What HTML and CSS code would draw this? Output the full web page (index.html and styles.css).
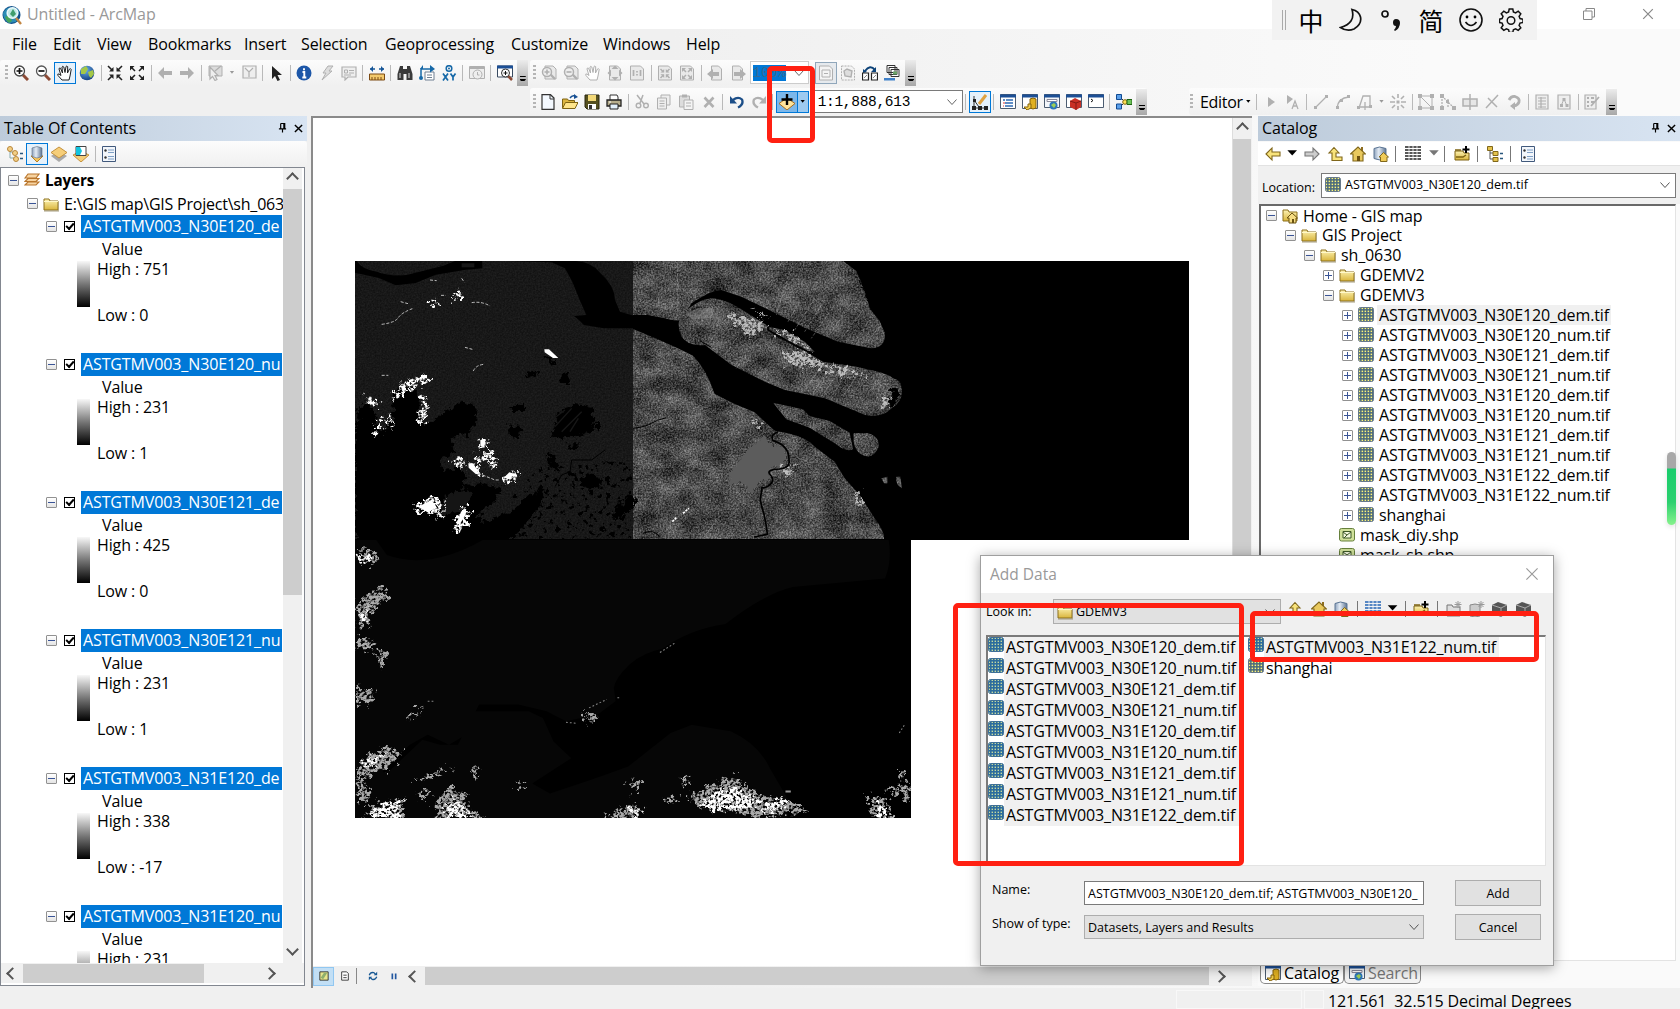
FILE: index.html
```html
<!DOCTYPE html>
<html lang="en">
<head>
<meta charset="utf-8">
<title>Untitled - ArcMap</title>
<link rel="stylesheet" href="styles.css">
</head>
<body>
<svg class="defs" width="0" height="0" aria-hidden="true">
  <defs>
    <linearGradient id="gold" x1="0" y1="0" x2="0" y2="1"><stop offset="0" stop-color="#fdf3b4"/><stop offset="1" stop-color="#d9b53c"/></linearGradient>
    <linearGradient id="steel" x1="0" y1="0" x2="1" y2="0"><stop offset="0" stop-color="#8fa3bd"/><stop offset=".4" stop-color="#e4ecf5"/><stop offset="1" stop-color="#5c7390"/></linearGradient>
    <radialGradient id="ball" cx=".4" cy=".3" r=".8"><stop offset="0" stop-color="#6db4ee"/><stop offset="1" stop-color="#0a3378"/></radialGradient>
    <pattern id="cells" width="3" height="3" patternUnits="userSpaceOnUse"><rect width="3" height="3" fill="#4b6a7c"/><rect x=".6" y=".6" width="1.5" height="1.5" fill="#fff57a"/></pattern>
    <pattern id="cells-sel" width="3" height="3" patternUnits="userSpaceOnUse"><rect width="3" height="3" fill="#2c6c9d"/><rect x=".6" y=".6" width="1.4" height="1.4" fill="#c5d9a0"/></pattern>
  </defs>
  <symbol id="logo" viewBox="0 0 20 20"><circle cx="9.500" cy="10" r="9" fill="#12508a"/><path d="M1 8q3-6 9-6 4 0 7 4l-3 11-7 1Q1 15 1 8" fill="#2b8cb5"/><path d="M3 12l4-2 3 6-3 2q-3-2-4-6" fill="#46a35a"/><circle cx="10.500" cy="8" r="5.300" fill="#bfe8e5" stroke="#e8f7fa" stroke-width="1.600"/><path d="M8 9l3-5 3 5-3 3z" fill="#3f9d6d"/><path d="M14 13l5 6" stroke="#c28541" stroke-width="2.400"/></symbol>
  <symbol id="zoomin" viewBox="0 0 16 16"><path d="M10 10l5 5" stroke="#8c4a35" stroke-width="3"/><circle cx="6.500" cy="6" r="5" fill="#fff" stroke="#444" stroke-width="1.300"/><path d="M3.500 6h6M6.500 3v6" stroke="#111" stroke-width="1.700"/></symbol>
  <symbol id="zoomout" viewBox="0 0 16 16"><path d="M10 10l5 5" stroke="#8c4a35" stroke-width="3"/><circle cx="6.500" cy="6" r="5" fill="#fff" stroke="#555" stroke-width="1.300"/><path d="M3.500 6h6" stroke="#111" stroke-width="1.700"/></symbol>
  <symbol id="hand" viewBox="0 0 16 16"><path d="M5 15L1 10.500Q0 8.500 2 9l2 1.500L2 4q0-1.500 1.500-.8L5.500 8 5 2q.7-1.500 1.800 0L8 7.500 9 1.500q1-1.200 1.700.2L10.500 8l2-4q1.300-.8 1.700.4L13 11l-1 4z" fill="#fff" stroke="currentColor"/></symbol>
  <symbol id="globe" viewBox="0 0 16 16"><circle cx="8" cy="8" r="7.300" fill="url(#ball)"/><path d="M2 4l5-3 2 3-3 5-4 0zM9 7l5-2 1 4-3 4-2-2z" fill="#a5c847"/></symbol>
  <symbol id="inward" viewBox="0 0 16 16"><path d="M1 1l4 4M15 1l-4 4M1 15l4-4M15 15l-4-4" stroke="currentColor" stroke-width="1.600"/><path d="M6.500 2v4.500H2zM9.500 2v4.500H14zM6.500 14V9.500H2zM9.500 14V9.500H14z" fill="currentColor"/></symbol>
  <symbol id="outward" viewBox="0 0 16 16"><path d="M2 2l4 4M14 2l-4 4M2 14l4-4M14 14l-4-4" stroke="currentColor" stroke-width="1.600"/><path d="M1 5.500V1h4.500zM10.500 1H15v4.500zM1 10.500V15h4.500zM10.500 15H15v-4.500z" fill="currentColor"/></symbol>
  <symbol id="back" viewBox="0 0 16 16"><path d="M1 8l6-6v4h8v4H7v4z" fill="currentColor"/></symbol>
  <symbol id="fwd" viewBox="0 0 16 16"><path d="M15 8L9 2v4H1v4h8v4z" fill="currentColor"/></symbol>
  <symbol id="select" viewBox="0 0 16 16"><path d="M2 1h13v10H2z" fill="#dcdcdc" stroke="currentColor"/><path d="M8 6l6-5M3 2v12l2.500-2.500L8 15.500l2-1-2-4h3z" fill="#eee" stroke="currentColor" stroke-width="1.200"/></symbol>
  <symbol id="clear" viewBox="0 0 16 16"><path d="M2 1h13v12H2zM4 3l4 4 4-4M8 7v5" fill="#eee" stroke="currentColor" stroke-width="1.200"/></symbol>
  <symbol id="cursor" viewBox="0 0 16 16"><path d="M4 1v13l3-3 2.500 5 2.500-1-2.500-5H14z" fill="currentColor"/></symbol>
  <symbol id="info" viewBox="0 0 16 16"><circle cx="8" cy="8" r="7.500" fill="#1d57a8"/><path d="M8 3.200v2M6.500 7H8.300v5.300M6.300 12.500h4" stroke="#fff" stroke-width="1.900" fill="none"/></symbol>
  <symbol id="bolt" viewBox="0 0 16 16"><path d="M9 1l5 0-4 5h3L3 15l4-7H4z" fill="#ddd" stroke="currentColor"/></symbol>
  <symbol id="bubble" viewBox="0 0 16 16"><path d="M1 2h14v10H7l-3 3v-3H1z" fill="#eee" stroke="currentColor" stroke-width="1.200"/><path d="M3.500 5h3v3h-3zM8 5.500h5M8 8h5M3 10h7" stroke="currentColor" fill="none"/></symbol>
  <symbol id="measure" viewBox="0 0 16 16"><path d="M1 4h5M10 4h5" stroke="#155597" stroke-width="1.500"/><path d="M4 1v6L1 4zM12 1v6l3-3z" fill="#155597"/><path d="M.5 9h15v6H.5z" fill="#f3c96b" stroke="#7c4a13"/><path d="M3 12v3M6 12v3M9 12v3M12 12v3" stroke="#7c4a13"/></symbol>
  <symbol id="find" viewBox="0 0 16 16"><path d="M3 1h3v3h4V1h3l2.500 8v6H9.500V9h-3v6H.5V9z" fill="#3a3a3a"/><path d="M3 8v5M12 8v5" stroke="#aaa" stroke-width="1.500"/></symbol>
  <symbol id="route" viewBox="0 0 16 16"><path d="M6 7h9v8H6z" fill="#fff" stroke="#6e7f91"/><path d="M8 10h5M8 12.500h5" stroke="#6e7f91"/><path d="M2 13V4h10" stroke="#1769a8" stroke-width="1.500" fill="none"/><path d="M11 0l5 4-5 3.500zM4 0v4H1z" fill="#1769a8"/><circle cx="2" cy="13" r="2" fill="#1769a8"/></symbol>
  <symbol id="gridmark" viewBox="0 0 16 16"><circle cx="8" cy="3.500" r="2.800" fill="none" stroke="#1769a8" stroke-width="1.500"/><circle cx="8" cy="3.500" r="1" fill="#1769a8"/><path d="M2 8.500l5 7M7 8.500l-5 7M9.500 8.500l2.500 3.500 2.500-3.500M12 12v3.500" stroke="#1769a8" stroke-width="1.700" fill="none"/></symbol>
  <symbol id="clock" viewBox="0 0 16 16"><path d="M.5 1.500h15v12H.5z" fill="#eee" stroke="currentColor"/><path d="M1 3h14" stroke="currentColor" stroke-width="2"/><circle cx="8.500" cy="9.500" r="4.500" fill="#eee" stroke="currentColor"/><path d="M8.500 7v3h2" stroke="currentColor" fill="none"/></symbol>
  <symbol id="viewer" viewBox="0 0 16 16"><path d="M.5 1h15v11H.5z" fill="#fff" stroke="#3a4b60"/><path d="M0 2h16" stroke="#1c4f95" stroke-width="3"/><path d="M11 11l4 4" stroke="#8c4a35" stroke-width="2.500"/><circle cx="8.500" cy="8" r="4" fill="#fff" stroke="#333"/><path d="M6.500 8h4M8.500 6v4" stroke="#111"/></symbol>
  <symbol id="pagemag" viewBox="0 0 16 16"><path d="M4 1h8l3 3v10H4z" fill="#e9e9e9" stroke="currentColor"/><path d="M9 9l5 5" stroke="currentColor" stroke-width="2.400"/><circle cx="6" cy="7" r="4.500" fill="#eee" stroke="currentColor" stroke-width="1.500"/><path d="M3.500 7h5M6 4.500v5" stroke="currentColor" stroke-width="1.600"/></symbol>
  <symbol id="pagemag2" viewBox="0 0 16 16"><path d="M4 1h8l3 3v10H4z" fill="#e9e9e9" stroke="currentColor"/><path d="M9 9l5 5" stroke="currentColor" stroke-width="2.400"/><circle cx="6" cy="7" r="4.500" fill="#eee" stroke="currentColor" stroke-width="1.500"/><path d="M3.500 7h5" stroke="currentColor" stroke-width="1.600"/></symbol>
  <symbol id="page4" viewBox="0 0 16 16"><path d="M2.500 1h8l3 3v11h-11z" fill="#e9e9e9" stroke="currentColor"/><path d="M8 .5l3.500 3.500h-7zM8 15.500l3.500-3.500h-7zM.5 8L4 4.500v7zM15.500 8L12 4.500v7z" fill="currentColor"/></symbol>
  <symbol id="page11" viewBox="0 0 16 16"><path d="M1.500 1h10l3 3v11h-13z" fill="#e9e9e9" stroke="currentColor"/><path d="M4.500 5v6M11.500 5v6M8 6v1.500M8 9v1.500" stroke="currentColor" stroke-width="1.700"/></symbol>
  <symbol id="pagein" viewBox="0 0 16 16"><path d="M1.500 1h10l3 3v11h-13z" fill="#e9e9e9" stroke="currentColor"/><path d="M3.500 4l3 3M12.500 4l-3 3M3.500 13l3-3M12.500 13l-3-3" stroke="currentColor" stroke-width="1.500"/><path d="M7.200 4v3.500H3.500zM8.800 4v3.500h3.700zM7.200 13V9.300H3.500zM8.800 13V9.300h3.700z" fill="currentColor"/></symbol>
  <symbol id="pageout" viewBox="0 0 16 16"><path d="M1.500 1h10l3 3v11h-13z" fill="#e9e9e9" stroke="currentColor"/><path d="M4 4l3 3M12 4L9 7M4 13l3-3M12 13l-3-3" stroke="currentColor" stroke-width="1.500"/><path d="M3 3h4L3 7zM13 3H9l4 4zM3 14h4l-4-4zM13 14H9l4-4z" fill="currentColor"/></symbol>
  <symbol id="pageback" viewBox="0 0 16 16"><path d="M4.500 1h7l3 3v11h-10z" fill="#e9e9e9" stroke="currentColor"/><path d="M0 9l6-5v3h6v4H6v3z" fill="currentColor"/></symbol>
  <symbol id="pagefwd" viewBox="0 0 16 16"><path d="M2.500 1h7l3 3v11h-10z" fill="#e9e9e9" stroke="currentColor"/><path d="M16 9l-6-5v3H4v4h6v3z" fill="currentColor"/></symbol>
  <symbol id="pagebox" viewBox="0 0 16 16"><path d="M1.500 1h10l3 3v11h-13z" fill="#f4f4f4" stroke="currentColor"/><path d="M4 5h8v7H4zM6 8.500h4" fill="none" stroke="currentColor"/></symbol>
  <symbol id="pagesel" viewBox="0 0 16 16"><path d="M1.500 1h10l3 3v11h-13z" fill="#f4f4f4" stroke="currentColor" stroke-dasharray="2 1"/><path d="M4 6l3-2 5 2-1 6-6-1z" fill="#ddd" stroke="currentColor" stroke-width="1.400"/></symbol>
  <symbol id="swap" viewBox="0 0 16 16"><path d="M3 6q5-7 10-1" stroke="#0d4379" stroke-width="2" fill="none"/><path d="M14 2v5H9zM1 4l0 4 4-1z" fill="#0d4379"/><path d="M.5 8h6v7h-6zM9.500 8h6v7h-6z" fill="#fff" stroke="#222" stroke-width="1.200"/><path d="M2 13l3-3M11 13l3-3" stroke="#888"/></symbol>
  <symbol id="pages" viewBox="0 0 16 16"><path d="M3 .5h8v7H3zM5 2.500h8v7H5zM7 4.500h8v7H7z" fill="#fff" stroke="#333"/><path d="M9 6.500h4v3H9z" fill="#6ba368"/><path d="M0 13h11v2.500H0z" fill="#3f80c8"/></symbol>
  <symbol id="new" viewBox="0 0 16 16"><path d="M2 .7h8.500L14 4v11.300H2z" fill="#f4f9ff" stroke="#333" stroke-width="1.200"/><path d="M10 1v4h4" fill="none" stroke="#333"/></symbol>
  <symbol id="open" viewBox="0 0 16 16"><path d="M.5 14V5h5l1 1.500h6V9" fill="#dcb540" stroke="#7e6312"/><path d="M.5 14.500l3-6H16l-3 6z" fill="#ffe58a" stroke="#7e6312"/><path d="M8 4q2-3 5-2" stroke="#164f93" stroke-width="1.500" fill="none"/><path d="M12 0l4 3-4 2z" fill="#164f93"/></symbol>
  <symbol id="save" viewBox="0 0 16 16"><path d="M1 1h14v14H3l-2-2z" fill="#55501f" stroke="#2a2710"/><path d="M4 1h8v6H4z" fill="#f2d878"/><path d="M4 10h8v5H4z" fill="#fff"/><path d="M5 11h3v4H5z" fill="#333"/></symbol>
  <symbol id="print" viewBox="0 0 16 16"><path d="M4 7V1h7l1 2v4" fill="#fff" stroke="#333"/><path d="M1 6h14v6H1z" fill="#b7ae8d" stroke="#222" stroke-width="1.300"/><path d="M4 10h8v5H4z" fill="#e3f0fb" stroke="#222"/><path d="M3 8h2" stroke="#fff"/></symbol>
  <symbol id="cut" viewBox="0 0 16 16"><path d="M3 1l7 9M9 1L6 9" stroke="currentColor" stroke-width="1.500"/><circle cx="4.500" cy="11.500" r="2.300" fill="none" stroke="currentColor" stroke-width="1.400"/><circle cx="12" cy="11.500" r="2.300" fill="none" stroke="currentColor" stroke-width="1.400"/></symbol>
  <symbol id="copy" viewBox="0 0 16 16"><path d="M5 1h9v10H5z" fill="#eee" stroke="currentColor"/><path d="M1.500 4h9v11h-9zM3.500 7h5M3.500 9.500h5M3.500 12h5" fill="#eee" stroke="currentColor"/></symbol>
  <symbol id="paste" viewBox="0 0 16 16"><path d="M1.500 2h10v11h-10z" fill="#ddd" stroke="currentColor"/><path d="M4 .5h5v3H4z" fill="currentColor"/><path d="M6 6h9v9.500H6zM8 9h5M8 12h5" fill="#f4f4f4" stroke="currentColor"/></symbol>
  <symbol id="del" viewBox="0 0 16 16"><path d="M3.500 3.500l9 9.500M12.500 3.500l-9 9.500" stroke="currentColor" stroke-width="2.600"/></symbol>
  <symbol id="undo" viewBox="0 0 16 16"><path d="M4 6q5-4 9-.5 2 5-4 8" stroke="currentColor" stroke-width="2.300" fill="none"/><path d="M1 2v7.500h7z" fill="currentColor"/></symbol>
  <symbol id="redo" viewBox="0 0 16 16"><path d="M12 6Q7 2 3 5.500q-2 5 4 8" stroke="currentColor" stroke-width="2.300" fill="none"/><path d="M15 2v7.500H8z" fill="currentColor"/></symbol>
  <symbol id="adddata" viewBox="0 0 16 16"><path d="M0 9.500L8 4l8 5.500L8 16z" fill="#ffe39a" stroke="#a86d1e"/><path d="M8 0v11M2.500 5.500h11" stroke="#000" stroke-width="2.400"/></symbol>
  <symbol id="sketch" viewBox="0 0 16 16"><path d="M2 2v12h12M2 6l5 7" stroke="#333" fill="none"/><path d="M0 12h4v4H0zM6 12h4v4H6zM12 12h4v4h-4zM1 5h3v3H1z" fill="#222"/><path d="M7 10L14 1" stroke="#dfa241" stroke-width="3"/></symbol>
  <symbol id="wintoc" viewBox="0 0 16 16"><path d="M.5 .5h15v14H.5z" fill="#fff" stroke="#4c5c70"/><path d="M0 2h16" stroke="#1c4f95" stroke-width="3"/><path d="M3 6h2M6 6h7M5 9h8M5 12h8" stroke="#2c69b4" stroke-width="1.300"/><path d="M3 9h2M3 12h1" stroke="#d33"/></symbol>
  <symbol id="wincat" viewBox="0 0 16 16"><path d="M.5 .5h15v14H.5z" fill="#fff" stroke="#4c5c70"/><path d="M0 2h16" stroke="#1c4f95" stroke-width="3"/><path d="M8 5q3-2 6 0v9q-3 2-6 0z" fill="#e0b022" stroke="#85620a"/><path d="M2 13h4v-3h3v4l-4 2z" fill="#f2cf4e" stroke="#85620a"/></symbol>
  <symbol id="winsearch" viewBox="0 0 16 16"><path d="M.5 .5h15v13H.5z" fill="#f3f6fa" stroke="#4c5c70"/><path d="M0 2h16" stroke="#1c4f95" stroke-width="3"/><path d="M3 5.500h10v2H3z" fill="#fff" stroke="#889"/><circle cx="9.500" cy="11.500" r="4" fill="#2d76b8"/><path d="M7 11l3-2 2 2-2 3z" fill="#9dcf55"/></symbol>
  <symbol id="wintool" viewBox="0 0 16 16"><path d="M.5 .5h15v13H.5z" fill="#fff" stroke="#4c5c70"/><path d="M0 2h16" stroke="#1c4f95" stroke-width="3"/><path d="M4 7l5-3 6 3v6l-5 3-6-3z" fill="#c93126"/><path d="M4 7l6 2v7M10 9l5-2" stroke="#831b14" fill="none"/></symbol>
  <symbol id="winpy" viewBox="0 0 16 16"><path d="M.5 .5h15v13H.5z" fill="#fff" stroke="#4c5c70"/><path d="M0 2h16" stroke="#1c4f95" stroke-width="3"/><path d="M3 5l2 1.500L3 8" stroke="#111" fill="none"/></symbol>
  <symbol id="model" viewBox="0 0 16 16"><path d="M4 3l5 5-5 5M8 8h5" stroke="#333" fill="none"/><path d="M.5 .5h5v5h-5zM.5 10h5v5h-5z" fill="#5ca0ea" stroke="#114a92"/><circle cx="9" cy="8" r="2.300" fill="#ffdf55" stroke="#866a10"/><path d="M11 5.500h5v5h-5z" fill="#6ec45a" stroke="#1f6312"/></symbol>
  <symbol id="tip" viewBox="0 0 16 16"><path d="M5 3v10l7-5z" fill="currentColor"/></symbol>
  <symbol id="tipa" viewBox="0 0 16 16"><path d="M2 1v9l6-5z" fill="currentColor"/><path d="M7 15l3-8 3 8M8 12h4" stroke="currentColor" fill="none" stroke-width="1.300"/></symbol>
  <symbol id="seg" viewBox="0 0 16 16"><path d="M2 14L14 2" stroke="currentColor" stroke-width="1.300"/><path d="M1 12h3v3H1zM12 1h3v3h-3z" fill="currentColor"/></symbol>
  <symbol id="arc" viewBox="0 0 16 16"><path d="M2 14Q3 4 14 3" stroke="currentColor" stroke-width="1.300" fill="none"/><path d="M1 12h3v3H1zM12 1h3v3h-3zM5 5h3v3H5z" fill="currentColor"/></symbol>
  <symbol id="trace" viewBox="0 0 16 16"><path d="M2 14L6 2h7v10M2 13h13M8 8v8" stroke="currentColor" stroke-width="1.300" fill="none"/><path d="M0 12h3v3H0zM12 11h3v3h-3z" fill="currentColor"/></symbol>
  <symbol id="spark" viewBox="0 0 16 16"><path d="M8 0v4M8 12v4M0 8h5M11 8h5M2 2l3 3M14 2l-3 3M2 14l3-3M14 14l-3-3" stroke="currentColor" stroke-width="1.600"/><path d="M6.500 6.500h3v3h-3z" fill="currentColor"/></symbol>
  <symbol id="verts" viewBox="0 0 16 16"><path d="M2 2l12 12H2zM4 2h10v10" stroke="currentColor" fill="none"/><path d="M0 0h4v4H0zM12 0h4v4h-4zM0 12h4v4H0zM12 12h4v4h-4z" fill="currentColor"/></symbol>
  <symbol id="reshape" viewBox="0 0 16 16"><path d="M2 2v12M2 2l12 12M8 5v9" stroke="currentColor" stroke-dasharray="2 1" stroke-width="1.300" fill="none"/><path d="M0 0h4v4H0zM0 12h4v4H0zM12 12h4v4h-4zM6 6h3v3H6z" fill="currentColor"/></symbol>
  <symbol id="cutpoly" viewBox="0 0 16 16"><path d="M1 5h14v7H1z" fill="#e6e6e6" stroke="currentColor" stroke-width="1.500"/><path d="M8 0v16" stroke="currentColor" stroke-width="1.500"/></symbol>
  <symbol id="split" viewBox="0 0 16 16"><path d="M2 14L14 1M4 4l9 9" stroke="currentColor" stroke-width="1.500"/></symbol>
  <symbol id="rotate" viewBox="0 0 16 16"><path d="M3 6q2-4 6-3.500Q14 4 13 8q-1 3-5 4" fill="none" stroke="currentColor" stroke-width="2.800"/><path d="M9 8v8l-5-4z" fill="currentColor"/></symbol>
  <symbol id="attrs" viewBox="0 0 16 16"><path d="M2 1h12v14H2zM4 4h8M4 7h8M4 10h8M4 13h8M7 3v11" stroke="currentColor" stroke-width="1.200" fill="#eee"/></symbol>
  <symbol id="sketchprop" viewBox="0 0 16 16"><path d="M2 1h12v14H2z" stroke="currentColor" stroke-width="1.200" fill="#eee"/><path d="M5 12l3-7 3 7" stroke="currentColor" fill="none"/><path d="M4 10h3v3H4zM6.500 4h3v3h-3zM9.500 10h3v3h-3z" fill="currentColor"/></symbol>
  <symbol id="form" viewBox="0 0 16 16"><path d="M1 1h11v14H1z" stroke="currentColor" stroke-width="1.200" fill="#eee"/><path d="M3 4h2M3 8h2M3 12h2M7 4h3M7 8h3M7 12l8-9" stroke="currentColor" stroke-width="1.800"/></symbol>
  <symbol id="bydraw" viewBox="0 0 16 16"><path d="M3 3v9h5M3 6h5" stroke="#8aa" fill="none"/><circle cx="3" cy="3" r="2.500" fill="#f3cf85" stroke="#b8863a"/><circle cx="8" cy="7" r="2.500" fill="#f3cf85" stroke="#b8863a"/><circle cx="9" cy="13" r="2.500" fill="#f3cf85" stroke="#b8863a"/><path d="M13 7.500h3M13 12.500h3" stroke="#28567d" stroke-width="1.500"/></symbol>
  <symbol id="bysource" viewBox="0 0 16 16"><path d="M2 10h12l-6 6z" fill="#f6c65c" stroke="#b88025"/><path d="M3 2q5-3 10 0v8.500q-5 3-10 0z" fill="url(#steel)" stroke="#5f6f84" stroke-width=".6"/></symbol>
  <symbol id="byvis" viewBox="0 0 16 16"><path d="M0 10l8 6 8-6-8-5z" fill="#a9a9a9"/><path d="M0 6.500L8 1l8 5.500-8 5.500z" fill="#f6ce79" stroke="#c4923e"/></symbol>
  <symbol id="bysel" viewBox="0 0 16 16"><path d="M0 9l8 7 8-7-8-4z" fill="#f6ce79" stroke="#c4923e"/><path d="M3 .5h10v9H3z" fill="#fff" stroke="#444"/><path d="M3 1h4l2 4-2 4H3z" fill="#12c5e0"/></symbol>
  <symbol id="options" viewBox="0 0 16 16"><path d="M1.500 .5h13v15h-13z" fill="#f2f6fb" stroke="#41597c"/><path d="M7 4h6M7 6.500h6M7 10.500h6M7 13h6" stroke="#7fa0c6"/><circle cx="4.500" cy="4.500" r="1.200" fill="#333"/><circle cx="4.500" cy="11.500" r="1.200" fill="#333"/></symbol>
  <symbol id="stack" viewBox="0 0 16 16"><path d="M1 13l3-3h11l-3 3zM1 9.500l3-3h11l-3 3zM1 6l3-4h11l-3 4z" fill="#f7d3a0" stroke="#b9762d" stroke-width="1.200"/></symbol>
  <symbol id="folder" viewBox="0 0 16 16"><path d="M1 14V3h5l1 2h8v9z" fill="url(#gold)" stroke="#8d711c"/><path d="M1 5.500h14" stroke="#fff8c8"/><path d="M1 15h15V6" stroke="#8f8763" stroke-width=".8" fill="none"/></symbol>
  <symbol id="homefolder" viewBox="0 0 16 16"><path d="M1 13V2h5l1 2h8v9z" fill="url(#gold)" stroke="#8d711c"/><path d="M5 10l5-5 5.500 5H14v5H7v-5z" fill="#f5dc82" stroke="#6a5210"/><path d="M10 15v-4h2v4" fill="#6a5210"/></symbol>
  <symbol id="raster" viewBox="0 0 16 16"><rect x=".5" y=".5" width="15" height="14" rx="2" fill="url(#cells)" stroke="#66798a"/></symbol>
  <symbol id="rastersel" viewBox="0 0 16 16"><rect x=".5" y=".5" width="15" height="14" rx="2" fill="url(#cells-sel)" stroke="#3f7097"/></symbol>
  <symbol id="shape" viewBox="0 0 16 16"><rect x=".5" y="1.500" width="15" height="12.500" rx="2" fill="#cfe09a" stroke="#66803c"/><path d="M4 4.500h8v6.500H4z" fill="#f2f7dd" stroke="#3f5a28"/><path d="M4 5l4 3-3 3M8 8l4-3" stroke="#3f5a28" fill="none"/></symbol>
  <symbol id="yback" viewBox="0 0 16 16"><path d="M1 8l6-6v4h8v4H7v4z" fill="#f8e37b" stroke="#80671b" stroke-width="1.100"/></symbol>
  <symbol id="gfwd" viewBox="0 0 16 16"><path d="M15 8L9 2v4H1v4h8v4z" fill="#ccc" stroke="#777" stroke-width="1.100"/></symbol>
  <symbol id="up" viewBox="0 0 16 16"><path d="M7 1.500l5 5.500H9v4h6v3.500H5V7H2z" fill="#f8e37b" stroke="#80671b" stroke-width="1.100"/></symbol>
  <symbol id="home" viewBox="0 0 16 16"><path d="M11 1h2v4h-2z" fill="#8d6d20"/><path d="M.5 8L8 1l7.500 7H13v7H3V8z" fill="#e9c95e" stroke="#80671b" stroke-width="1.100"/><path d="M7 10h3v5H7z" fill="#6c500e"/></symbol>
  <symbol id="dbhome" viewBox="0 0 16 16"><path d="M1 2.500q5-3 12 0v10q-6 3-12 0z" fill="url(#steel)" stroke="#5c7695"/><path d="M6 11l4.500-4.500L15.500 11H14v4.500H7.500V11z" fill="#efcb58" stroke="#80671b"/></symbol>
  <symbol id="table" viewBox="0 0 16 16"><path d="M0 1h16M0 4h16M0 7h16M0 10h16M0 13h16" stroke="currentColor" stroke-width="1.500"/><path d="M4 0v16M8 0v16M12 0v16" stroke="#fff" stroke-width=".8"/></symbol>
  <symbol id="connect" viewBox="0 0 16 16"><path d="M1 14V5h8l1 2h5v7z" fill="url(#gold)" stroke="#7e6312"/><path d="M1 4h6M2 11h7l3-2" stroke="#7e6312" stroke-width="1.500" fill="none"/><path d="M12 0v7M8.500 3.500h7" stroke="#000" stroke-width="2"/></symbol>
  <symbol id="ctree" viewBox="0 0 16 16"><path d="M3 4v9h5M3 7h5" stroke="#555" fill="none"/><path d="M.5 .5h5v4h-5zM6 5.500h5v4H6zM6 11.500h5v4H6z" fill="#e5c34d" stroke="#80671b"/><path d="M13 7.500h3M13 12.500h3" stroke="#28567d" stroke-width="1.500"/></symbol>
  <symbol id="gfolder" viewBox="0 0 16 16"><path d="M1 15V4h5l1 2h7v9z" fill="#ddd" stroke="#777"/><path d="M12 0v7M8.500 3.500h7M9.500 1l5 5M14.500 1l-5 5" stroke="#999"/></symbol>
  <symbol id="gdb" viewBox="0 0 16 16"><path d="M1 4q5-2 10 0v11q-5 2-10 0z" fill="#ccc" stroke="#888"/><path d="M12 0v7M8.500 3.500h7M9.500 1l5 5M14.500 1l-5 5" stroke="#999"/></symbol>
  <symbol id="gbox" viewBox="0 0 16 16"><path d="M0 4l6-3 9 3v8l-6 4-9-4z" fill="#555"/><path d="M0 4l9 3v9M9 7l6-3" stroke="#aaa" fill="none"/></symbol>
  <symbol id="chev-d" viewBox="0 0 12 12"><path d="M1.500 3.500L6 8.500l4.500-5" stroke="currentColor" fill="none"/></symbol>
  <symbol id="pin" viewBox="0 0 10 12"><path d="M3 1h4.500v6M3 1v6M6.500 1v6M1 7h8M5 7v4" stroke="#000" stroke-width="1.300" fill="none"/></symbol>
  <symbol id="close" viewBox="0 0 10 10"><path d="M1 1l8 8M9 1L1 9" stroke="currentColor" fill="none"/></symbol>
</svg>

<div class="app">
  <header class="titlebar"><svg class="logo"><use href="#logo"/></svg><span>Untitled - ArcMap</span></header>
  <nav class="menubar"><span>File</span><span>Edit</span><span>View</span><span>Bookmarks</span><span>Insert</span><span>Selection</span><span>Geoprocessing</span><span>Customize</span><span>Windows</span><span>Help</span></nav>

  <div class="bars">
    <div class="barrow">
      <div class="bar tools">
        <i class="grip"></i>
        <b><svg><use href="#zoomin"/></svg></b><b><svg><use href="#zoomout"/></svg></b><b class="on dark"><svg><use href="#hand"/></svg></b><b><svg><use href="#globe"/></svg></b><i class="sep"></i>
        <b class="dark"><svg><use href="#inward"/></svg></b><b class="dark"><svg><use href="#outward"/></svg></b><i class="sep"></i>
        <b><svg><use href="#back"/></svg></b><b><svg><use href="#fwd"/></svg></b><i class="sep"></i>
        <b><svg><use href="#select"/></svg></b><i class="caret"></i><b><svg><use href="#clear"/></svg></b><i class="sep"></i>
        <b class="dark"><svg><use href="#cursor"/></svg></b><i class="sep"></i>
        <b><svg><use href="#info"/></svg></b><b><svg><use href="#bolt"/></svg></b><b><svg><use href="#bubble"/></svg></b><i class="sep"></i>
        <b><svg><use href="#measure"/></svg></b><i class="sep"></i>
        <b><svg><use href="#find"/></svg></b><b><svg><use href="#route"/></svg></b><b><svg><use href="#gridmark"/></svg></b><i class="sep"></i>
        <b><svg><use href="#clock"/></svg></b><i class="sep"></i><b><svg><use href="#viewer"/></svg></b><i class="more"></i>
      </div>
      <div class="bar layout">
        <i class="grip"></i>
        <b><svg><use href="#pagemag"/></svg></b><b><svg><use href="#pagemag2"/></svg></b><b><svg><use href="#hand"/></svg></b><b><svg><use href="#page4"/></svg></b><b><svg><use href="#page11"/></svg></b><i class="sep"></i>
        <b><svg><use href="#pagein"/></svg></b><b><svg><use href="#pageout"/></svg></b><i class="sep"></i>
        <b><svg><use href="#pageback"/></svg></b><b><svg><use href="#pagefwd"/></svg></b>
        <span class="percent"><em>100%</em><svg><use href="#chev-d"/></svg></span>
        <b class="on pale"><svg><use href="#pagebox"/></svg></b><b><svg><use href="#pagesel"/></svg></b><b><svg><use href="#swap"/></svg></b><b><svg><use href="#pages"/></svg></b><i class="more"></i>
      </div>
    </div>
    <div class="barrow second">
      <div class="bar standard">
        <i class="grip"></i>
        <b><svg><use href="#new"/></svg></b><b><svg><use href="#open"/></svg></b><b><svg><use href="#save"/></svg></b><b><svg><use href="#print"/></svg></b><i class="sep"></i>
        <b><svg><use href="#cut"/></svg></b><b><svg><use href="#copy"/></svg></b><b><svg><use href="#paste"/></svg></b><b><svg><use href="#del"/></svg></b><i class="sep"></i>
        <b class="navy"><svg><use href="#undo"/></svg></b><b><svg><use href="#redo"/></svg></b><i class="sep"></i>
        <b class="add"><svg><use href="#adddata"/></svg></b><b class="add drop"><i class="caret black"></i></b>
        <span class="scale">1:1,888,613<svg><use href="#chev-d"/></svg></span><i class="sep"></i>
        <b class="on"><svg><use href="#sketch"/></svg></b><i class="sep"></i>
        <b><svg><use href="#wintoc"/></svg></b><b><svg><use href="#wincat"/></svg></b><b><svg><use href="#winsearch"/></svg></b><b><svg><use href="#wintool"/></svg></b><b><svg><use href="#winpy"/></svg></b><i class="sep"></i>
        <b><svg><use href="#model"/></svg></b><i class="more"></i>
      </div>
      <div class="bar editor">
        <i class="grip"></i><span class="edlabel">Editor</span><i class="caret black"></i><i class="sep"></i>
        <b><svg><use href="#tip"/></svg></b><b><svg><use href="#tipa"/></svg></b><i class="sep"></i>
        <b><svg><use href="#seg"/></svg></b><b><svg><use href="#arc"/></svg></b><b><svg><use href="#trace"/></svg></b><i class="caret"></i><b><svg><use href="#spark"/></svg></b><i class="sep"></i>
        <b><svg><use href="#verts"/></svg></b><b><svg><use href="#reshape"/></svg></b><b><svg><use href="#cutpoly"/></svg></b><b><svg><use href="#split"/></svg></b><b><svg><use href="#rotate"/></svg></b><i class="sep"></i>
        <b><svg><use href="#attrs"/></svg></b><b><svg><use href="#sketchprop"/></svg></b><i class="sep"></i><b><svg><use href="#form"/></svg></b><i class="more"></i>
      </div>
    </div>
  </div>

  <main class="work">
    <section class="toc">
      <h2 class="head">Table Of Contents<svg class="pin"><use href="#pin"/></svg><svg class="x"><use href="#close"/></svg></h2>
      <div class="bar tocbar"><b><svg><use href="#bydraw"/></svg></b><b class="on"><svg><use href="#bysource"/></svg></b><b><svg><use href="#byvis"/></svg></b><b><svg><use href="#bysel"/></svg></b><i class="sep"></i><b><svg><use href="#options"/></svg></b></div>
      <div class="tocbox">
        <div class="tocmain">
          <div class="toclist">
            <div class="trow root"><i class="box"></i><svg><use href="#stack"/></svg><strong>Layers</strong></div>
            <div class="trow src"><i class="box"></i><svg><use href="#folder"/></svg><span>E:\GIS map\GIS Project\sh_063</span></div>
            <div class="layer"><div class="lname"><i class="box"></i><i class="check"></i><span>ASTGTMV003_N30E120_de</span></div><p>Value</p><div class="ramp"><i></i><span>High : 751</span><span>Low : 0</span></div></div>
            <div class="layer"><div class="lname"><i class="box"></i><i class="check"></i><span>ASTGTMV003_N30E120_nu</span></div><p>Value</p><div class="ramp"><i></i><span>High : 231</span><span>Low : 1</span></div></div>
            <div class="layer"><div class="lname"><i class="box"></i><i class="check"></i><span>ASTGTMV003_N30E121_de</span></div><p>Value</p><div class="ramp"><i></i><span>High : 425</span><span>Low : 0</span></div></div>
            <div class="layer"><div class="lname"><i class="box"></i><i class="check"></i><span>ASTGTMV003_N30E121_nu</span></div><p>Value</p><div class="ramp"><i></i><span>High : 231</span><span>Low : 1</span></div></div>
            <div class="layer"><div class="lname"><i class="box"></i><i class="check"></i><span>ASTGTMV003_N31E120_de</span></div><p>Value</p><div class="ramp"><i></i><span>High : 338</span><span>Low : -17</span></div></div>
            <div class="layer last"><div class="lname"><i class="box"></i><i class="check"></i><span>ASTGTMV003_N31E120_nu</span></div><p>Value</p><div class="ramp"><i></i><span>High : 231</span></div></div>
          </div>
          <div class="vscroll"><i class="arr u"></i><i class="thumb"></i><i class="arr d"></i></div>
        </div>
        <div class="hscroll"><i class="arr l"></i><i class="thumb"></i><i class="arr r"></i></div>
      </div>
    </section>

    <section class="view">
      <div class="viewmain">
        <div class="canvas">
          <svg class="map" viewBox="0 0 834 557" width="834" height="557">
            <defs>
              <filter id="land" x="0" y="0" width="1" height="1" color-interpolation-filters="sRGB">
                <feTurbulence type="fractalNoise" baseFrequency=".2" numOctaves="2" seed="4" result="n"/>
                <feColorMatrix in="n" values="1.2 0 0 0 -.33 1.2 0 0 0 -.33 1.2 0 0 0 -.33 0 0 0 0 1" result="fine"/>
                <feTurbulence type="fractalNoise" baseFrequency=".014 .02" numOctaves="4" seed="9"/>
                <feColorMatrix values=".7 0 0 0 -.07 .7 0 0 0 -.07 .7 0 0 0 -.07 0 0 0 0 1" result="coarse"/>
                <feComposite in="fine" in2="coarse" operator="arithmetic" k2=".5" k3=".55" result="m"/>
                <feComposite in="m" in2="SourceAlpha" operator="in"/>
              </filter>
              <filter id="dim" x="0" y="0" width="1" height="1" color-interpolation-filters="sRGB">
                <feTurbulence type="fractalNoise" baseFrequency=".2" numOctaves="2" seed="2"/>
                <feColorMatrix values=".1 0 0 0 .045 .1 0 0 0 .045 .1 0 0 0 .045 0 0 0 0 1"/>
                <feComposite in2="SourceAlpha" operator="in"/>
              </filter>
              <filter id="rough" x="-.2" y="-.2" width="1.400" height="1.400" color-interpolation-filters="sRGB">
                <feTurbulence type="fractalNoise" baseFrequency=".07" numOctaves="3" seed="7" result="n"/>
                <feDisplacementMap in="SourceGraphic" in2="n" scale="30" xChannelSelector="R" yChannelSelector="G"/>
              </filter>
              <filter id="ridge" x="-.2" y="-.2" width="1.400" height="1.400" color-interpolation-filters="sRGB">
                <feTurbulence type="fractalNoise" baseFrequency=".06" numOctaves="4" seed="12" result="n"/>
                <feDisplacementMap in="SourceGraphic" in2="n" scale="50" xChannelSelector="R" yChannelSelector="G" result="d"/>
                <feTurbulence type="fractalNoise" baseFrequency=".12" numOctaves="3" seed="33"/>
                <feColorMatrix values="0 0 0 0 1 0 0 0 0 1 0 0 0 0 1 0 0 4.500 0 -1.500" result="a"/>
                <feComposite in="d" in2="a" operator="in"/>
              </filter>
              <filter id="specks" x="0" y="0" width="1" height="1" color-interpolation-filters="sRGB">
                <feTurbulence type="fractalNoise" baseFrequency=".06" numOctaves="3" seed="21"/>
                <feColorMatrix values="0 0 0 0 0 0 0 0 0 0 0 0 0 0 0 14 0 0 0 -8.400"/>
                <feComposite in2="SourceAlpha" operator="in"/>
              </filter>
              <clipPath id="nw"><path d="M0 3h834v834H0z"/></clipPath>
              <clipPath id="ne"><path d="M0 3h840v834H0z"/></clipPath>
              <clipPath id="sw"><path d="M0 0h1568v829H0z"/></clipPath>
            </defs>
            <path d="M0 0h834v279H556v278H0z" fill="#000"/>
            <g transform="translate(0 -1) scale(.33333)" clip-path="url(#nw)">
              <path d="M0 3h834v834H0z" filter="url(#dim)"/>
              <path d="M560 620q80-30 274-10v227H400q60-140 160-217z" filter="url(#specks)"/>
              <path d="M0 3h5q15 25 60 32 40 15 90 10 60-15 110-28L300 3h82v22l-50 4-90 15-60 25-60 7-50-22L0 38z"/>
              <path d="M320 10h38v12h-38z" fill="#181818"/>
              <path d="M455 3h185q65-4 95 35 45 40 45 82l15 35 42 12v38h-90l-60-10-15-15-15-12 37-3-22-50-20-50-22-40-40-18z"/>
              <g filter="url(#rough)">
                <path d="M0 500l10-20 0-38 30-10 25 35-5 30 25 10 30-25-5-80 30-25 35 8 20 30-5 60 20 20 35-20 30-25 50-25 40 15-5 55-25 30-45 5 5 50-40 20 10 30 50-5 25 25-20 25 60-5 60 15-30 50-45 30 20 20 80-25 50-50 35-15 10-25 10 40-30 50-60 70-60 40-80 40H50L0 820z"/>
                <path d="M570 290l25 5 8 22-25-8zM618 340l20-10 8 40-30-2zM465 435h45v18h-40zM590 530l20-70 40-25 60 5 8 70-50 20-55 2zM575 575l25 5 5 50-20-8zM675 665l25-28 40 20-5 25-50 5zM770 765l55-65 20 10v30l-60 40zM638 553h30v12h-30zM720 485h12v25h-12zM500 355l60-15-30-8zM460 495l40 10-10 30-30-10z"/>
              </g>
              <g fill="none" stroke="#171717" stroke-width="4"><path d="M600 500l50-55M620 515l60-60M590 480l40-30M645 515l25-40"/></g>
              <path d="M600 680l20-35 25-10 5-35 60 0 40-30" stroke="#000" stroke-width="3" fill="none"/>
              <path d="M270 705l60-20 25 20-40 50-60 10z" fill="#151515" filter="url(#rough)"/>
              <g fill="#fff" filter="url(#ridge)">
                <path d="M110 410l25-38 60-28 32 12-10 18-55 10-30 28-14 20zM195 405l22 10-2 40 10 15-30 28-12-20 18-24zM28 410l28 0 20 35-30-5zM55 525l12-48 22-5-14 44zM92 480l22-14-2 45z"/>
                <path d="M345 575l25 20 30-25 32 30-10 28-30-25-20 5zM275 602l54-5 8 30-34-10zM345 610l28 10 14 34-25-10zM170 740l65-32 30 16-4 56-25-25-50 0zM300 780l30-42 18 25-25 52-30-5zM440 670l15-30 45-5-20 28zM225 122h28v12h-28zM288 104l32-14 6 22-30 6zM380 540l24 0-4 30-20-8z"/>
              </g>
              <path d="M568 268l14 0 28 26-16 0-25-17zM376 540h15l-3 23-12-6zM340 610l15 0 16 30-8 3-22-20zM198 345h18v10h-18zM190 740l40-20 14 20-24 18zM318 755l10-8 5 15-18 30-10-3zM445 655l18-18 16 5-15 12z" fill="#fff"/>
              <g fill="none" stroke="#bbb" stroke-width="3" stroke-dasharray="9 5"><path d="M80 193q40-5 50-20t42-27M350 128q30-5 55 10M225 60l20 2M320 55l8 12M355 333q8-18 32-20M137 125l22 6M330 262l22 6M370 640l50 20h15M80 346h20M258 106h15"/></g>
            </g>
            <g transform="translate(278 -1) scale(.33333)" clip-path="url(#ne)">
              <g filter="url(#land)">
                <path d="M0 3h630l40 30 22 50 20 65 28 35 15 35q5 45-40 47l-100-20-100-42-90-45-100-48-60-20q-30 0-90 40l-20 40q-15 20-60 5l-50-10H0z"/>
                <path d="M150 160q50-45 90-45 40 5 80 30l80 50 30 35 80 40 60 35 100 15q100 20 110 35 25 5 26 30 5 40-30 60-30 30-80 20l-120-50-120-25-60-25-100-50q-40-30-80-60-50 5-70-25-20-40 4-70z"/>
                <path d="M405 200l50 10 60 35 30 30-30-3-50-25-60-35zM420 428l90 20 20 20 60 15 60 35 10 50q-20 10-50-15l-80-50-70-25zM665 520h40q35 10 32 40-15 35-40 28-40-10-35-68zM745 655l18-5v20h-10zM790 650l12 0 5 35q-20-10-17-35z"/>
                <path d="M0 207l60 25q70 30 120 55 40 40 65 115l60 30 60 25 60 55 40 8q60 15 80 40l60 45 30 50 45 50 45 70q30 40 28 62H0z"/>
              </g>
              <g fill="#d0d0d0" opacity=".85" filter="url(#ridge)"><path d="M275 160l50 10 60 15 20 20-40 10-15 25-30-40zM450 280l70-10 50 40 80 15 60 25-60-5-120-25-70-10zM410 203l70 20 50 40-60-20zM745 410l24 0v30h-24zM345 480l45 10-5 12zM665 700l18 0 4 45-18-10zM440 620l50-10-20 40zM360 150l50 18-20 5z"/></g>
              <path d="M365 545l30-15 20 20 45 20v25l-20 20-30 10 0 30-40 20-15 30-20-30-20-10-20 10-10-30z" fill="#5c5c5c" filter="url(#rough)"/>
              <path d="M155 163l40-18 45 0 0 28-60 5z" fill="#999" opacity=".4"/>
              <g stroke="#bbb" stroke-width="2" stroke-dasharray="10 5" opacity=".6" fill="none"><path d="M480 5l-50 160M500 125l-35 60M545 115l-60 95M575 120l-60 95M615 120l-80 115M655 130l-70 100M690 150l-60 80M710 180l-40 60M740 200l-40 50M134 10v150M565 320l-50 70M590 325l-50 75M620 330l-55 80M645 335l-50 75M670 350l-45 65M690 355l-40 65M310 235l-30 45M330 300l-20 25M410 310l-20 30M270 755l-60 80"/></g>
              <path d="M118 785l12-12M150 760l18-15" stroke="#fff" stroke-width="5" stroke-dasharray="7 3"/>
              <path d="M435 515q-25 10-15 27 50 15 48 60 5 20-28 25-40 2-30 15 15 15 5 28-15 15-28 13l-5 35q5 30 10 40l8 40 3 25-40 8" fill="none" stroke="#000" stroke-width="5"/>
              <path d="M405 200l0 10 80 45 60 30" fill="none" stroke="#000" stroke-width="5"/>
              <path d="M200 242l35 20M0 505q40-5 55-15t45-17M30 820q30-15 50 10" fill="none" stroke="#000" stroke-width="3"/>
              <path d="M770 380l25 0-5 55-18 5-6-20 14-14zM0 715h15l-15 30zM750 185l5 60M665 35l35 60 20 60" filter="url(#rough)"/>
            </g>
            <g transform="translate(0 279) scale(.3546 .3357)" clip-path="url(#sw)">
              <path d="M0 0h1505q10 60-10 115l-260 25q-80 20-190 110-100 15-180 75-50 10-90 45-40 40-45 70l5 40-50 40-90 20-55-30-80-20H350l-45 95-40 25-60-30-50 30-75 70 0 100H0zM530 530l30 70 50 50-110 75 50 30 140-50 80-30 120-100 60-25 110 20q80 40 110 110l50 90 0 59H0V720l60-20 40-15 90-90 50 15 50 0 50-100h150z" fill="#060606"/>
              <path d="M60 0h300q-150 90-270 45z"/>
              <g fill="#aaa" filter="url(#ridge)">
                <path d="M5 30l40 0 25 10-20 30-45-5zM5 190l60-50 30 20-45 60-30 50-15-5zM5 290l50 10-15 30-35-5zM5 435l50 20-15 35-30-3zM145 540l25-34 20-10-15 29zM5 670l70-55 60 20-40 45-80 30zM5 705l40 40-15 35-25-5zM20 829l40-45 70-15 15 60zM225 780l45-45 40 20 10 50 50 24H235zM940 770l70-45 60-20 60 50 80 20 60 20-20 15-120 20-70-25-60 0zM645 515l24 0 18 18-33 14zM760 790l60 10-20 29h-95zM1440 760l55 10 20 60-50 0zM1525 685l28 0-2 28-15-5zM1500 745l60-25 5 60-30-20zM770 710l40 10-20 40zM55 340l35-10-15 50zM325 680l32 8-15 14zM455 715l28 10-20 10zM155 720l70-30 50-10-60 30zM920 715l20-10v30zM870 765l50 5-40 15zM165 755l50-10-20 30z"/>
              </g>
              <g fill="#fff" filter="url(#ridge)"><path d="M980 775l60-35 70 15 40 25-60 20-90 5zM1140 795l70-30 20 20-60 30zM35 829l40-45 50-10 0 55zM240 795l40-20 55 54h-60zM5 35l25 10 15 25-35 0zM10 670l75-40-30 45zM1470 790l30 5 5 34-25 0zM10 230l30-40-10 50zM770 800l35 5-10 20z"/></g>
              <path d="M1214 746h15v6h-15z" fill="#999"/>
              <path d="M860 335l45-30M740 470h8M205 480h18M595 543l30 3M660 500l50-25M1535 575l15-25" stroke="#888" stroke-width="3" stroke-dasharray="5 6"/>
            </g>
          </svg>
        </div>
        <div class="vscroll"><i class="arr u"></i><i class="thumb"></i></div>
      </div>
      <div class="viewbar">
        <b class="vb on"><svg viewBox="0 0 12 12"><path d="M1 1h10v10H1z" fill="#e7e58d" stroke="#222"/><path d="M2 8l4-6 4 0-5 8z" fill="#8eaf6d"/></svg></b>
        <b class="vb"><svg viewBox="0 0 12 12"><path d="M2 1h6l2 2v8H2zM4 5h4M4 8h4" fill="#fff" stroke="#222"/></svg></b><i class="sep"></i>
        <b class="vb"><svg viewBox="0 0 12 12"><path d="M1.500 5Q3 1 7 2l2 2M10.500 7Q9 11 5 10L3 8" fill="none" stroke="#185894" stroke-width="1.500"/><path d="M7 5h4V1zM5 7H1v4z" fill="#185894"/></svg></b>
        <b class="vb"><svg viewBox="0 0 12 12"><path d="M4 3v7M8 3v7" stroke="#2257a0" stroke-width="2"/></svg></b>
        <div class="hscroll"><i class="arr l"></i><i class="thumb"></i><i class="arr r"></i></div>
      </div>
    </section>

    <section class="catalog">
      <h2 class="head">Catalog<svg class="pin"><use href="#pin"/></svg><svg class="x"><use href="#close"/></svg></h2>
      <div class="catbar"><b><svg><use href="#yback"/></svg></b><i class="caret big"></i><b><svg><use href="#gfwd"/></svg></b><b><svg><use href="#up"/></svg></b><b><svg><use href="#home"/></svg></b><b><svg><use href="#dbhome"/></svg></b><i class="sep"></i><b class="wide dark"><svg><use href="#table"/></svg></b><i class="caret big gray"></i><i class="sep"></i><b class="wide"><svg><use href="#connect"/></svg></b><i class="sep"></i><b class="wide"><svg><use href="#ctree"/></svg></b><i class="sep"></i><b class="wide"><svg><use href="#options"/></svg></b></div>
      <div class="loc"><label>Location:</label><div class="loccombo"><svg><use href="#raster"/></svg><span>ASTGTMV003_N30E120_dem.tif</span><svg class="chev"><use href="#chev-d"/></svg></div></div>
      <div class="cattree">
        <div class="crow l0"><i class="box"></i><svg><use href="#homefolder"/></svg><span>Home - GIS map</span></div>
        <div class="crow l1"><i class="box"></i><svg><use href="#folder"/></svg><span>GIS Project</span></div>
        <div class="crow l2"><i class="box"></i><svg><use href="#folder"/></svg><span>sh_0630</span></div>
        <div class="crow l3"><i class="box plus"></i><svg><use href="#folder"/></svg><span>GDEMV2</span></div>
        <div class="crow l3"><i class="box"></i><svg><use href="#folder"/></svg><span>GDEMV3</span></div>
        <div class="crow l4"><i class="box plus"></i><svg><use href="#raster"/></svg><span class="cur">ASTGTMV003_N30E120_dem.tif</span></div>
        <div class="crow l4"><i class="box plus"></i><svg><use href="#raster"/></svg><span>ASTGTMV003_N30E120_num.tif</span></div>
        <div class="crow l4"><i class="box plus"></i><svg><use href="#raster"/></svg><span>ASTGTMV003_N30E121_dem.tif</span></div>
        <div class="crow l4"><i class="box plus"></i><svg><use href="#raster"/></svg><span>ASTGTMV003_N30E121_num.tif</span></div>
        <div class="crow l4"><i class="box plus"></i><svg><use href="#raster"/></svg><span>ASTGTMV003_N31E120_dem.tif</span></div>
        <div class="crow l4"><i class="box plus"></i><svg><use href="#raster"/></svg><span>ASTGTMV003_N31E120_num.tif</span></div>
        <div class="crow l4"><i class="box plus"></i><svg><use href="#raster"/></svg><span>ASTGTMV003_N31E121_dem.tif</span></div>
        <div class="crow l4"><i class="box plus"></i><svg><use href="#raster"/></svg><span>ASTGTMV003_N31E121_num.tif</span></div>
        <div class="crow l4"><i class="box plus"></i><svg><use href="#raster"/></svg><span>ASTGTMV003_N31E122_dem.tif</span></div>
        <div class="crow l4"><i class="box plus"></i><svg><use href="#raster"/></svg><span>ASTGTMV003_N31E122_num.tif</span></div>
        <div class="crow l4"><i class="box plus"></i><svg><use href="#raster"/></svg><span>shanghai</span></div>
        <div class="crow leaf"><svg><use href="#shape"/></svg><span>mask_diy.shp</span></div>
        <div class="crow leaf"><svg><use href="#shape"/></svg><span>mask_sh.shp</span></div>
      </div>
      <div class="tabs"><div class="tab active"><svg><use href="#wincat"/></svg>Catalog</div><div class="tab"><svg><use href="#winsearch"/></svg>Search</div></div>
    </section>
  </main>
  <footer class="status"><i></i><i></i><span>121.561&nbsp; 32.515 Decimal Degrees</span></footer>
</div>

<div class="dialog">
  <div class="dtitle">Add Data<svg><use href="#close"/></svg></div>
  <div class="dlook"><label>Look in:</label><div class="dcombo"><svg><use href="#folder"/></svg><span>GDEMV3</span><svg class="chev"><use href="#chev-d"/></svg></div>
    <div class="dtools"><b><svg><use href="#up"/></svg></b><b><svg><use href="#home"/></svg></b><b><svg><use href="#dbhome"/></svg></b><i class="sep"></i><b class="blue"><svg><use href="#table"/></svg></b><i class="caret big"></i><i class="sep"></i><b><svg><use href="#connect"/></svg></b><i class="sep"></i><b><svg><use href="#gfolder"/></svg></b><b><svg><use href="#gdb"/></svg></b><b><svg><use href="#gbox"/></svg></b><b><svg><use href="#gbox"/></svg></b></div>
  </div>
  <div class="dlist">
    <div class="dcol">
      <div class="drow sel"><svg><use href="#rastersel"/></svg><span>ASTGTMV003_N30E120_dem.tif</span></div>
      <div class="drow sel"><svg><use href="#rastersel"/></svg><span>ASTGTMV003_N30E120_num.tif</span></div>
      <div class="drow sel"><svg><use href="#rastersel"/></svg><span>ASTGTMV003_N30E121_dem.tif</span></div>
      <div class="drow sel"><svg><use href="#rastersel"/></svg><span>ASTGTMV003_N30E121_num.tif</span></div>
      <div class="drow sel"><svg><use href="#rastersel"/></svg><span>ASTGTMV003_N31E120_dem.tif</span></div>
      <div class="drow sel"><svg><use href="#rastersel"/></svg><span>ASTGTMV003_N31E120_num.tif</span></div>
      <div class="drow sel"><svg><use href="#rastersel"/></svg><span>ASTGTMV003_N31E121_dem.tif</span></div>
      <div class="drow sel"><svg><use href="#rastersel"/></svg><span>ASTGTMV003_N31E121_num.tif</span></div>
      <div class="drow sel"><svg><use href="#rastersel"/></svg><span>ASTGTMV003_N31E122_dem.tif</span></div>
    </div>
    <div class="dcol">
      <div class="drow sel"><svg><use href="#rastersel"/></svg><span>ASTGTMV003_N31E122_num.tif</span></div>
      <div class="drow"><svg><use href="#raster"/></svg><span>shanghai</span></div>
    </div>
  </div>
  <div class="dform">
    <label>Name:</label><div class="dinput"><span>ASTGTMV003_N30E120_dem.tif; ASTGTMV003_N30E120_</span></div><button>Add</button>
    <label>Show of type:</label><div class="dinput combo"><span>Datasets, Layers and Results</span><svg><use href="#chev-d"/></svg></div><button>Cancel</button>
  </div>
</div>

<div class="mark m1"></div><div class="mark m2"></div><div class="mark m3"></div>
<div class="meter"></div>
<div class="ime">
  <i class="bars2"></i><span>中</span>
  <svg viewBox="0 0 24 24"><path d="M13 1.500Q17 15 1.500 19.500 8 24 15 21 23 16 21.500 9 20 3 13 1.500z" fill="none" stroke="#111" stroke-width="1.700"/></svg>
  <svg viewBox="0 0 24 24"><circle cx="6" cy="6" r="3" fill="none" stroke="#111" stroke-width="1.700"/><path d="M17 11q4 0 4 4 0 5-5 8l-1-1q2-2 2-4-3 0-3-3.500t3-3.500" fill="#111"/></svg>
  <span>简</span>
  <svg viewBox="0 0 24 24"><circle cx="12" cy="12" r="11" fill="none" stroke="#111" stroke-width="1.600"/><path d="M6.500 14q5.500 7 11 0" fill="none" stroke="#111" stroke-width="1.600"/><circle cx="8" cy="9" r="1.400"/><circle cx="16" cy="9" r="1.400"/></svg>
  <svg viewBox="0 0 24 24"><path d="M10.200 1h3.600l.6 3 2.200.9L19.200 3.200l2.600 2.600-1.700 2.600.9 2.100 3 .7v3.300l-3 .6-.9 2.200 1.700 2.600-2.600 2.500-2.600-1.600-2.200.9-.6 2.800h-3.600l-.6-2.800-2.200-.9-2.600 1.600-2.600-2.500L4 17.300l-.9-2.200-2.600-.6v-3.300l2.600-.7.9-2.100L2.200 5.800l2.600-2.600L7.400 4.900l2.200-.9z" fill="none" stroke="#111" stroke-width="1.500"/><circle cx="12" cy="12.500" r="3.800" fill="none" stroke="#111" stroke-width="1.500"/></svg>
</div>
<div class="winbtns"><svg viewBox="0 0 12 12"><path d="M.5 3h8.500v8.500H.5zM3 3V.5h8.500V9H9" fill="none" stroke="#888"/></svg><svg><use href="#close"/></svg></div>
</body>
</html>
```
FILE: styles.css
```css
* { box-sizing: border-box; }
body { margin: 0; width: 1680px; height: 1009px; overflow: hidden; position: relative; font-family: "Open Sans", "Noto Sans", "Noto Sans CJK SC", sans-serif; font-size: 16px; letter-spacing: -.12px; color: #000; background: #f0f0f0; }
.defs { position: absolute; }
i, em { font-style: normal; }
svg { display: block; flex: none; }
.app { height: 1009px; display: flex; flex-direction: column; background: linear-gradient(90deg, #f0f0f0 0, #f0f0f0 40%, #fafafa 85%); }

.titlebar { height: 29px; flex: none; background: #fff; display: flex; align-items: center; gap: 5px; padding-left: 2px; color: #999; }
.titlebar span { padding-bottom: 1px; }
.logo { width: 20px; height: 20px; }
.menubar { height: 31px; flex: none; display: grid; grid-template-columns: 41px 44px 51px 96px 57px 84px 126px 92px 83px 60px; padding-left: 12px; line-height: 31px; white-space: nowrap; }

.bars { height: 56px; flex: none; }
.barrow { height: 28px; display: flex; align-items: flex-start; }
.barrow .bar { height: 25px; }
.barrow.second { padding: 0 0 0 530px; }
.barrow.second .bar { height: 27px; }
.bar { height: 26px; display: flex; align-items: center; background: linear-gradient(#fcfcfc, #f0f0f0); border-radius: 3px; color: #b0b0b0; }
.bar b, .catbar b, .dtools b { width: 22.100px; height: 22px; flex: none; display: flex; align-items: center; justify-content: center; }
b svg { width: 16px; height: 16px; }
.bar .on { border: 1px solid #0078d7; background: #e5f1fb; }
.bar .pale { border-color: #90a7bb; background: #e6eaee; }
.dark { color: #222; }
.bar .dark { color: #222; }
.bar .navy { color: #1c4e88; }
.blue { color: #2464b4; }
.grip { width: 3px; height: 15px; margin: 0 4px 0 5px; background: repeating-linear-gradient(#b5b5b5 0 2px, transparent 2px 4px); flex: none; }
.sep { width: 1px; height: 16px; margin: 0 2.450px; background: #b9b9b9; flex: none; }
.caret { width: 11px; height: 4px; flex: none; background: #999; clip-path: polygon(27% 0, 73% 0, 50% 80%); }
.caret.black { background: #000; }
.caret.big { width: 16px; height: 8px; background: #000; clip-path: polygon(20% 10%, 80% 10%, 50% 75%); }
.caret.gray { background: #777; }
.more { width: 11px; height: 26px; margin-left: 2px; flex: none; background: linear-gradient(#ececec, #a8a8a8); position: relative; }
.more::after { content: ""; position: absolute; left: 3px; bottom: 3px; width: 6px; height: 6px; border-top: 1px solid #000; background: linear-gradient(#000, #000) center 2px / 6px 2px no-repeat; clip-path: polygon(0 0, 100% 0, 100% 60%, 50% 100%, 0 60%); }
.tools { width: 527px; margin-right: 3px; }
.tools .grip { margin-right: 2px; }
.tools .more { margin-left: 1px; }
.layout { width: 386px; }
.layout .grip { margin: 0 2px 0 3px; }
.layout .more { margin-left: auto; }
.percent { width: 59px; height: 23px; margin: 0 6px 0 1px; border: 1px solid #ccc; background: #fff; display: flex; align-items: center; justify-content: space-between; padding: 0 3px 0 2px; font: 14px "Liberation Mono", monospace; flex: none; }
.percent em { background: #0078d7; color: #356a95; height: 16px; line-height: 16px; }
.percent svg, .scale svg { width: 12px; height: 12px; color: #666; }
.standard { width: 617px; }
.standard .grip { margin: 0 1px 0 3px; }
.standard .add { background: #7cb7ea; border: 1px solid #0078d7; }
.standard .add.drop { width: 12px; margin: 0 5px 0 -1px; background: #9dcaf0; }
.scale { width: 149px; height: 23px; flex: none; border: 1px solid #7a7a7a; background: #fff; color: #000; display: flex; align-items: center; justify-content: space-between; padding: 0 4px 0 3px; font: 14.500px "Liberation Mono", monospace; letter-spacing: -.3px; }
.editor { width: 428px; margin-left: 42px; }
.editor .grip { margin: 0 7px 0 1px; }
.standard .more, .editor .more { margin-left: auto; }
.edlabel { color: #000; letter-spacing: -.3px; }

.work { height: 872px; flex: none; display: flex; }
.head { margin: 0; height: 25px; flex: none; display: flex; align-items: center; padding: 0 4px 1px; font-size: 16px; font-weight: 400; background: linear-gradient(90deg, #bdcbda, #d8e4f2); }
.head .pin { width: 9px; height: 12px; margin-left: auto; margin-right: 7px; }
.head .x { width: 9px; height: 9px; stroke-width: 1.600; }
.toc { width: 307px; margin-right: 4px; flex: none; display: flex; flex-direction: column; }
.tocbar { padding-left: 4px; }
.tocbox { width: 305px; height: 819px; border: 1px solid #828790; background: #fff; display: flex; flex-direction: column; }
.tocmain { display: flex; height: 795px; overflow: hidden; }
.toclist { width: 282px; overflow: hidden; }
.toclist svg { width: 16px; height: 16px; }
.trow { height: 23px; display: flex; align-items: center; white-space: nowrap; }
.trow.root { padding-left: 7px; height: 24px; }
.trow.root svg { margin: 0 5px; }
.trow.src { padding-left: 26px; height: 23px; }
.trow.src svg { margin: 0 5px 0 5px; }
.trow.src span { letter-spacing: -.22px; }
.trow strong { font-size: 15.200px; }
.box { width: 11px; height: 11px; flex: none; border: 1px solid #919191; border-radius: 1px; background: linear-gradient(#3a5496, #3a5496) center / 7px 1px no-repeat, linear-gradient(#fff, #e4e4e4); }
.box.plus { background: linear-gradient(#3a5496, #3a5496) center / 7px 1px no-repeat, linear-gradient(#3a5496, #3a5496) center / 1px 7px no-repeat, #fff; }
.layer { height: 138px; }
.layer.last { height: 60px; }
.lname { height: 23px; display: flex; align-items: center; padding-left: 45px; }
.lname span { background: #0078d7; color: #fff; height: 23px; line-height: 22px; padding-left: 2px; margin-left: 6px; white-space: nowrap; flex: none; width: 201px; }
.check { width: 11px; height: 11px; margin-left: 7px; flex: none; border: 1px solid #000; position: relative; }
.check::after { content: ""; position: absolute; left: 1px; top: 1px; width: 6px; height: 3px; border: solid #000; border-width: 0 0 2px 2px; transform: rotate(-48deg); }
.layer p { margin: 0; height: 22px; line-height: 23px; padding-left: 101px; }
.ramp { display: grid; grid-template: 20px 26px 20px / 13px 1fr; column-gap: 7px; padding-left: 76px; }
.ramp i { grid-row: 1 / 3; margin-top: 1px; height: 46px; background: linear-gradient(#f8f8f8, #777 50%, #000); }
.ramp span { line-height: 19px; }
.ramp span:nth-child(3) { grid-row: 3; grid-column: 2; }
.vscroll { background: #f0f0f0; display: flex; flex-direction: column; align-items: center; }
.tocmain .vscroll { width: 19px; padding-bottom: 3px; }
.tocmain .vscroll .thumb { width: 19px; height: 406px; margin-bottom: auto; }
.thumb { background: #cdcdcd; }
.arr { width: 20px; height: 21px; flex: none; display: flex; align-items: center; justify-content: center; }
.arr::after { content: ""; width: 7px; height: 7px; border: solid #555; border-width: 2px 0 0 2px; transform: rotate(45deg); }
.arr.d::after { transform: rotate(225deg); }
.arr.l::after { transform: rotate(-45deg); }
.arr.r::after { transform: rotate(135deg); }
.hscroll { height: 19px; display: flex; align-items: center; background: #f0f0f0; }
.tocbox .hscroll { height: 20px; padding-right: 25px; padding-left: 1px; }
.tocbox .hscroll .thumb { width: 181px; height: 19px; margin-left: 1px; margin-right: auto; }

.view { width: 941px; flex: none; display: flex; flex-direction: column; border: 1px solid #8a8a8a; border-width: 2px 0 0 2px; margin-right: 6px; }
.viewmain { height: 848px; display: flex; }
.canvas { width: 919px; background: #fff; padding: 143px 0 0 42px; flex: none; }
.viewmain .vscroll { width: 20px; border-left: 1px solid #ddd; padding-right: 1px; }
.viewmain .vscroll .thumb { width: 18px; height: 827px; }
.viewbar { display: flex; align-items: center; height: 20px; }
.vb { width: 21px; height: 19px; display: flex; align-items: center; justify-content: center; }
.vb svg { width: 10px; height: 10px; }
.vb.on { background: #c2dff5; border: 1px solid #91c7f1; }
.viewbar .sep { margin: 0 5px 0 1px; background: #888; }
.viewbar .hscroll { flex: 1; padding-right: 23px; }
.viewbar .thumb { flex: 1; height: 18px; }
.viewbar .arr.l { width: 21px; }

.catalog { width: 422px; flex: none; display: flex; flex-direction: column; }
.catbar { height: 24px; margin-top: 1px; background: #fff; border-bottom: 1px solid #e2e2e2; display: flex; align-items: center; padding-left: 3px; }
.catbar b { width: 23.200px; }
.catbar .wide { width: 26px; }
.catbar .sep { margin: 0 2.500px; background: #777; }
.catbar .sep + .wide { margin-left: 1px; }
.loc { height: 38px; background: #f0f0f0; display: flex; align-items: center; padding: 0 4px; letter-spacing: 0; }
.loc label { width: 59px; font-size: 12.500px; padding-top: 4px; }
.loccombo { flex: 1; height: 25px; margin-top: 2px; margin-bottom: 1px; border: 1px solid #7a7a7a; background: #fff; display: flex; align-items: center; gap: 4px; padding: 0 4px 2px 3px; font-size: 12.500px; }
.loccombo span { letter-spacing: .03px; }
.loccombo svg { width: 16px; height: 16px; }
.loccombo .chev { width: 12px; height: 12px; margin-left: auto; color: #555; }
.cattree { height: 757px; margin: 0 4px 0 1px; border: 1px solid #696969; border-right-color: #e3e3e3; border-bottom-color: #e3e3e3; border-width: 2px 1px 1px 2px; background: #fff; overflow: hidden; }
.crow { height: 20px; display: flex; align-items: center; white-space: nowrap; }
.crow:first-child { height: 19px; }
.crow svg { width: 16px; height: 16px; margin: 0 3px 0 5px; }
.crow span { padding: 0 2px; line-height: 20px; }
.cur { background: #f0f0f0; }
.l0 { padding-left: 5px; } .l1 { padding-left: 24px; } .l2 { padding-left: 43px; } .l3 { padding-left: 62px; } .l4 { padding-left: 81px; }
.leaf { padding-left: 73px; }
.tabs { display: flex; padding-left: 2px; height: 25px; padding-top: 1px; background: #fafafa; }
.tab { height: 22px; border: 1px solid #888; border-top: 0; border-radius: 0 0 5px 5px; display: flex; align-items: center; gap: 3px; padding: 0 4px; color: #777; background: #f3f3f3; width: 77px; white-space: nowrap; }
.tab.active { background: #fff; color: #000; width: 84px; }
.tab svg { width: 16px; height: 16px; }
.status { height: 21px; flex: none; background: #f0f0f0; display: flex; padding-left: 1176px; }
.status i { width: 126px; border: 1px solid #f8f8f8; margin: 2px 2px 0 0; }
.status i + i { width: 20px; margin-right: 4px; }
.status span { line-height: 27px; white-space: pre; }

.dialog { position: absolute; left: 980px; top: 555px; width: 574px; height: 411px; background: #f0f0f0; border: 1px solid #9f9f9f; box-shadow: 0 2px 12px rgba(0,0,0,.35); font-size: 12.500px; letter-spacing: 0; }
.dtitle { height: 37px; background: #fff; color: #999; font-size: 15.500px; display: flex; align-items: center; justify-content: space-between; padding: 0 14px 1px 9px; }
.dtitle svg { width: 14px; height: 14px; stroke-width: .8; }
.dlook { display: flex; height: 42px; padding: 6px 0 0 5px; }
.dlook label { width: 67px; line-height: 26px; }
.dcombo { width: 228px; height: 25px; background: #e1e1e1; border: 1px solid #adadad; display: flex; align-items: center; gap: 3px; padding: 0 4px 0 3px; }
.dcombo svg { width: 16px; height: 16px; }
.dcombo .chev, .combo svg { width: 12px; height: 12px; margin-left: auto; color: #555; }
.dtools { display: flex; align-items: center; height: 19px; padding-left: 3px; }
.dtools b { width: 23.400px; }
.dtools .sep { background: #777; margin: 0 3px; }
.dtools .sep ~ .sep { margin: 0 4px; }
.dlist { margin: 0 7px 0 5px; height: 231px; border: 2px solid #7a7a7a; border-right: 1px solid #e3e3e3; border-bottom: 1px solid #e3e3e3; background: #fff; display: flex; font-size: 16px; }
.dcol { width: 260px; flex: none; }
.drow { display: flex; height: 21px; white-space: nowrap; letter-spacing: -.15px; }
.drow svg { width: 16px; height: 16px; }
.drow span { padding-left: 2px; line-height: 21px; }
.drow.sel span { background: #f0f0f0; width: 235px; }
.dform { display: grid; grid-template-columns: 92px 340px 86px; grid-template-rows: 26px 26px; row-gap: 8px; padding: 14px 0 0 11px; }
.dform label { line-height: 20px; }
.dinput { height: 24px; margin-top: 1px; border: 1px solid #7a7a7a; background: #fff; display: flex; align-items: center; padding: 0 3px; white-space: nowrap; overflow: hidden; }
.dinput.combo { background: #e1e1e1; border-color: #adadad; }
.dform button { width: 86px; height: 26px; margin-left: 31px; border: 1px solid #adadad; background: #e1e1e1; font: inherit; letter-spacing: inherit; padding: 0; }

.mark { position: absolute; border: 5px solid #ff2012; border-radius: 5px; }
.m1 { left: 767px; top: 66px; width: 48px; height: 77px; }
.m2 { left: 953px; top: 603px; width: 291px; height: 263px; }
.m3 { left: 1250px; top: 611px; width: 289px; height: 51px; }
.meter { position: absolute; left: 1667px; top: 452px; width: 9px; height: 73px; border-radius: 5px; background: linear-gradient(#a8a8a8 0 16px, #19cd6c 17px, #2bd06f 50px, #86f28c); box-shadow: 0 2px 5px rgba(0,0,0,.12); }
.ime { position: absolute; left: 1272px; top: 0; width: 265px; height: 40px; background: #f2f2f2; display: grid; grid-template-columns: 14px repeat(6, 40px); align-items: center; justify-items: center; padding-left: 5px; font: 25px/1 "Noto Sans CJK SC", sans-serif; }
.ime svg { width: 24px; height: 24px; }
.bars2 { width: 4px; height: 20px; border: solid #aaa; border-width: 0 1px; }
.winbtns { position: absolute; left: 1583px; top: 8px; display: flex; gap: 47px; color: #888; }
.winbtns svg { width: 12px; height: 12px; }
```
